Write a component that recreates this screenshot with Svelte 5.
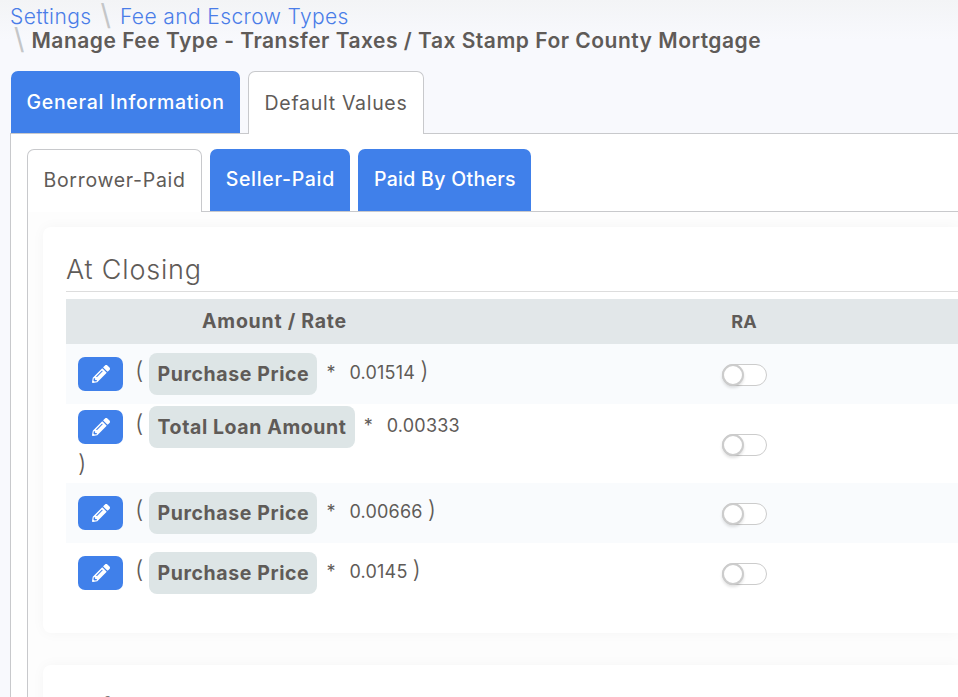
<script>
  const rows = [
    { field: "Purchase Price", rate: "0.01514" },
    { field: "Total Loan Amount", rate: "0.00333" },
    { field: "Purchase Price", rate: "0.00666" },
    { field: "Purchase Price", rate: "0.0145" }
  ];
</script>

<div class="page">
  <nav class="crumbs">
    <a href="#s">Settings</a><span class="sep">\</span><a href="#f">Fee and Escrow Types</a>
    <div class="current"><span class="sep">\</span><strong>Manage Fee Type - Transfer Taxes / Tax Stamp For County Mortgage</strong></div>
  </nav>

  <div class="tabs">
    <div class="tab blue">General Information</div>
    <div class="tab active">Default Values</div>
  </div>

  <div class="panel">
    <div class="tabs inner">
      <div class="tab active">Borrower-Paid</div>
      <div class="tab blue">Seller-Paid</div>
      <div class="tab blue tight">Paid By Others</div>
    </div>

    <div class="body">
      <section class="card">
        <h2>At Closing</h2>
        <div class="table">
          <div class="row head">
            <div class="c1">Amount / Rate</div>
            <div class="c2">RA</div>
          </div>
          {#each rows as row}
            <div class="row">
              <div class="c1">
                <button class="edit" aria-label="Edit">
                  <svg viewBox="0 0 512 512" width="18" height="18"><path fill="#fff" d="M497.9 142.1l-46.1 46.1c-4.7 4.7-12.3 4.7-17 0l-111-111c-4.7-4.7-4.7-12.3 0-17l46.1-46.1c18.7-18.7 49.1-18.7 67.9 0l60.1 60.1c18.8 18.7 18.8 49.1 0 67.9zM284.2 99.8L21.6 362.4.4 483.9c-2.9 16.4 11.4 30.6 27.8 27.8l121.5-21.3 262.6-262.6c4.7-4.7 4.7-12.3 0-17l-111-111c-4.8-4.7-12.4-4.7-17.1 0zM124.1 339.9c-5.5-5.5-5.5-14.3 0-19.8l154-154c5.5-5.5 14.3-5.5 19.8 0s5.5 14.3 0 19.8l-154 154c-5.5 5.5-14.3 5.5-19.8 0zM88 424h48v36.3l-64.5 11.3-31.1-31.1L51.7 376H88v48z"/></svg>
                </button>
                <span class="paren">(</span>
                <span class="chip">{row.field}</span>
                <span class="star">*</span>
                <span class="rate">{row.rate}</span>
                <span class="paren">)</span>
              </div>
              <div class="c2"><span class="toggle"><span class="knob"></span></span></div>
            </div>
          {/each}
        </div>
      </section>

      <section class="card next">
        <h2>Before Closing</h2>
      </section>
    </div>
  </div>
</div>

<style>
  :global(body) {
    margin: 0;
    background: #f8f9fd;
  }

  .page {
    width: 958px;
    height: 697px;
    overflow: hidden;
    box-sizing: border-box;
    padding: 3px 0 0 10px;
    font-family: Inter, "Liberation Sans", sans-serif;
    color: #5f5b58;
    background: linear-gradient(#f3f4f6, #f8f9fd 40px);
  }

  .crumbs {
    height: 68px;
    font-size: 21px;
    line-height: 23px;
    white-space: nowrap;
  }

  .crumbs a {
    color: #4a7de8;
    text-decoration: none;
    font-weight: 300;
    letter-spacing: 0.4px;
  }

  .sep {
    color: #c4c6c8;
    margin: 0 9px;
    font-size: 29px;
    line-height: 23px;
    font-weight: 400;
    vertical-align: -1px;
  }

  .current {
    margin-top: -1px;
  }

  .current .sep {
    margin: 0 7px 0 4px;
  }

  .current strong {
    font-size: 21px;
    font-weight: 600;
    letter-spacing: 0.5px;
  }

  .tabs {
    display: flex;
    align-items: flex-end;
    gap: 8px;
    margin-left: 1px;
  }

  .tab {
    height: 62px;
    line-height: 62px;
    box-sizing: border-box;
    padding: 0 15.5px;
    font-size: 19.5px;
    letter-spacing: 0.7px;
    border-radius: 7px 7px 0 0;
    white-space: nowrap;
  }

  .inner .tab {
    line-height: 60px;
  }

  .tab.blue {
    background: #4080ea;
    color: #fff;
    font-weight: 500;
  }

  .tab.tight {
    letter-spacing: 0.3px;
  }

  .tab.active {
    background: #fff;
    height: 63px;
    border: 1px solid #c8c9cc;
    border-bottom: none;
    margin-bottom: -1px;
  }

  .panel {
    background: #fff;
    border-left: 1px solid #c8c9cc;
    border-top: 1px solid #c8c9cc;
    padding: 15px 0 0 16px;
  }

  .tabs.inner {
    margin: 0;
    border-bottom: 1px solid #c8c9cc;
    height: 62px;
  }

  .body {
    border-left: 1px solid #c8c9cc;
    padding: 15px 0 0 15px;
    background: #fdfdfd;
  }

  .card {
    background: #fff;
    border-radius: 8px 0 0 8px;
    box-shadow: 0 0 14px rgba(0, 0, 0, 0.035);
    padding: 21px 0 30px 23px;
  }

  .next {
    margin-top: 32px;
  }

  h2 {
    margin: 0;
    font-size: 27px;
    font-weight: 300;
    line-height: 43px;
    letter-spacing: 0.8px;
    border-bottom: 1px solid #ddd;
  }

  .table {
    margin-top: 7px;
  }

  .row {
    display: grid;
    grid-template-columns: 417px 522px;
    align-items: center;
    min-height: 60px;
    font-size: 18px;
  }

  .row:nth-child(even) {
    background: #f9fbfd;
  }

  .row.head {
    background: #e2e7e9;
    font-weight: 700;
    min-height: 45px;
    text-align: center;
  }

  .head .c1 {
    font-size: 19.5px;
    letter-spacing: 0.75px;
    padding-bottom: 2px;
  }

  .row:not(.head) .c1 {
    box-sizing: border-box;
    padding: 2px 12px;
    line-height: 31px;
  }

  .row:not(.head) .c2 {
    display: flex;
    justify-content: center;
    padding-top: 2px;
  }

  .edit {
    width: 45px;
    height: 34px;
    border: none;
    border-radius: 7px;
    background: #4080ea;
    display: inline-flex;
    align-items: center;
    justify-content: center;
    vertical-align: middle;
    padding: 0;
    margin-right: 7px;
  }

  .paren {
    font-size: 24px;
    font-weight: 300;
    margin-right: 1px;
  }

  .chip {
    display: inline-block;
    background: #dde5e6;
    border-radius: 8px;
    padding: 4px 8px;
    line-height: 34px;
    font-weight: 700;
    font-size: 19.5px;
    letter-spacing: 0.6px;
    vertical-align: middle;
    margin-right: 4px;
  }

  .star {
    margin: 0 9px 0 0;
  }

  .rate {
    letter-spacing: 0.2px;
  }

  .toggle {
    display: block;
    position: relative;
    width: 45px;
    height: 22px;
    box-sizing: border-box;
    border: 1px solid #ccc;
    border-radius: 11px;
    background: #fff;
  }

  .knob {
    position: absolute;
    left: -1px;
    top: -1px;
    width: 22px;
    height: 22px;
    box-sizing: border-box;
    border: 2px solid #ccc;
    border-radius: 50%;
    background: #fff;
    box-shadow: 0 2px 3px rgba(0, 0, 0, 0.12);
  }
</style>
